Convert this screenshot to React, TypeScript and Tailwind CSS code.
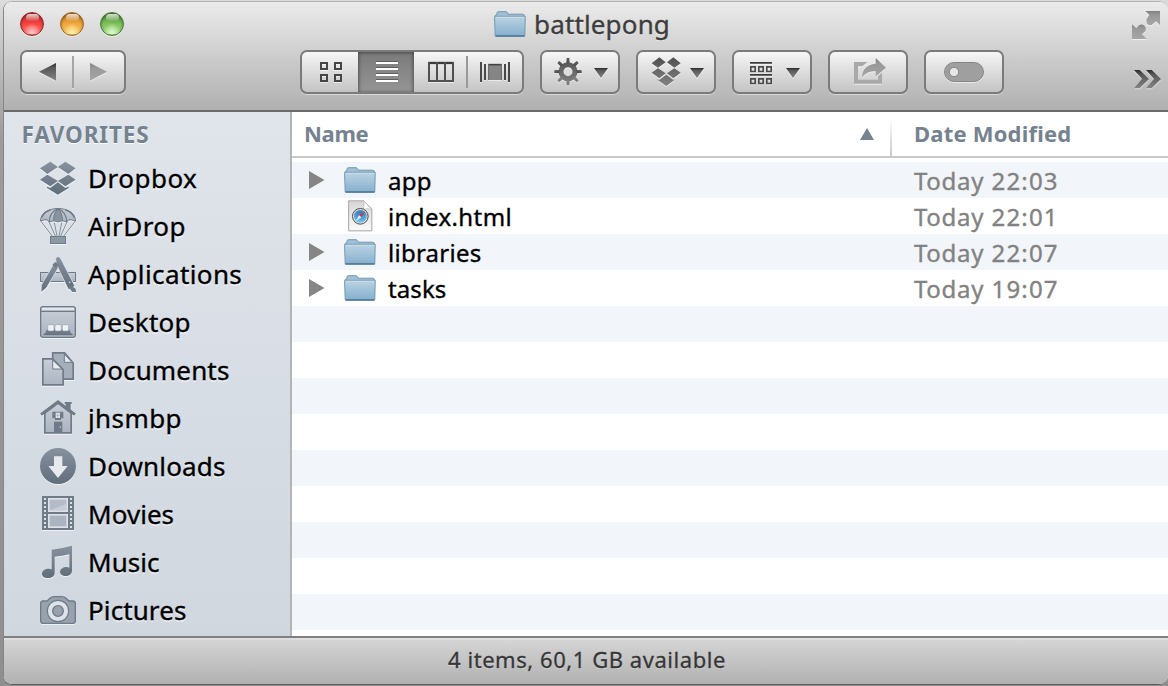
import React from "react";

type Row = { name: string; date: string; kind: "folder" | "html"; cls: string };

const rows: Row[] = [
  { name: "app", date: "Today 22:03", kind: "folder", cls: "tracking-[0.3px]" },
  { name: "index.html", date: "Today 22:01", kind: "html", cls: "tracking-[0.4px]" },
  { name: "libraries", date: "Today 22:07", kind: "folder", cls: "tracking-[0.25px]" },
  { name: "tasks", date: "Today 19:07", kind: "folder", cls: "tracking-[0.1px]" },
];

const emptyRows = 9;

function Folder() {
  return (
    <svg width="32" height="26" viewBox="0 0 32 26" className="shrink-0">
      <defs>
        <linearGradient id="folderBody" x1="0" y1="0" x2="0" y2="1">
          <stop offset="0" stopColor="#bcd3e2" />
          <stop offset="1" stopColor="#84afcd" />
        </linearGradient>
      </defs>
      <path d="M1.2 8V4.5L3 3.6V1.8Q3.2.7 4.4.7H12Q13 .7 13.4 1.8L14 3.2H28.5Q30.4 3.2 30.6 5V8Z" fill="#9fc0d6" stroke="#7297ae" strokeWidth="1" />
      <path d="M.8 5.3H31.2V7L30.8 24.5Q30.8 25.4 30 25.4H2Q1.2 25.4 1.2 24.5L.6 7Z" fill="url(#folderBody)" stroke="#6f9ab5" strokeWidth="1" />
      <path d="M1.6 6.3H30.4" stroke="#cfdfea" strokeWidth="1" />
      <path d="M1.5 24.8H30.5" stroke="#49728f" strokeWidth="1.2" />
    </svg>
  );
}

function HtmlFile() {
  return (
    <svg width="32" height="32" viewBox="161 269 96 96" className="shrink-0">
      <defs>
        <linearGradient id="page" x1="0" y1="0" x2="0" y2="1">
          <stop offset="0" stopColor="#d6d6d6" />
          <stop offset="1" stopColor="#fafafa" />
        </linearGradient>
        <linearGradient id="compass" x1="0" y1="0" x2="0" y2="1">
          <stop offset="0" stopColor="#2e6fb4" />
          <stop offset="1" stopColor="#62c3f5" />
        </linearGradient>
      </defs>
      <path d="M175 271.500H220L244.500 296V361.500H175Z" fill="url(#page)" stroke="#a5a5a5" strokeWidth="3" />
      <path d="M220 272Q223 284 219 297Q233 293 244 297Z" fill="#fff" stroke="#b5b5b5" strokeWidth="2" />
      <circle cx="210" cy="318" r="23.500" fill="#e4e4e4" stroke="#4c4c4c" strokeWidth="3" />
      <circle cx="210" cy="318" r="19" fill="url(#compass)" />
      <circle cx="210" cy="318" r="15.500" fill="none" stroke="#a9d8f7" strokeWidth="2.500" strokeDasharray="2 4" />
      <path d="M223 304L206 315L213 321Z" fill="#d8362e" />
      <path d="M197 332L206 315L213 321Z" fill="#f4f4f4" />
    </svg>
  );
}

const S = "#6f7b88";

function SideIcon({ y, children }: { y: number; children: React.ReactNode }) {
  return (
    <svg width="40" height="40" viewBox={`114 ${y} 120 120`} className="shrink-0 drop-shadow-[0_1px_0_rgba(255,255,255,0.6)]">
      {children}
    </svg>
  );
}

const G = "url(#slate)";
const L = "url(#slateLight)";

const sidebar: { label: string; cls: string; y: number; icon: React.ReactNode }[] = [
  {
    label: "Dropbox", cls: "tracking-[0.5px]", y: 144,
    icon: (
      <path fill={G} d="M120 175L151 155L173.500 171L142 192ZM227 175L196 155L173.500 171L205 192ZM120 209L142 194L173.500 213L151 229ZM227 209L205 194L173.500 213L196 229ZM141 230L151 234L173.500 217L196 234L206 230V234L173.500 254L141 234Z" />
    ),
  },
  {
    label: "AirDrop", cls: "tracking-[0.4px]", y: 288,
    icon: (
      <g stroke={S} strokeWidth="3" fill="none">
        <path d="M122 333L158 380M226 333L190 380M147 336L166 378M201 336L182 378M163 338L171 378M185 338L177 378" strokeWidth="2.500" />
        <path d="M121.500 333C121.500 308 148 295.500 174 295.500S226.500 308 226.500 333L213 329Q206 328 200 336Q187 328 174 336Q161 328 148 336Q142 328 135 329Z" fill={L} strokeLinejoin="round" />
        <path d="M148 336C148 318 156 303 174 296M200 336C200 318 192 303 174 296" strokeWidth="3.500" />
        <path d="M161 334C160 318 165 304 174 297C183 304 188 318 187 334" strokeWidth="3" fill="#8994a2" />
        <path d="M125 322Q132 305 152 300M223 322Q216 305 196 300" strokeWidth="5" />
        <rect x="151.500" y="379.500" width="45" height="21" fill="#8d98a5" />
      </g>
    ),
  },
  {
    label: "Applications", cls: "tracking-[0.4px]", y: 432,
    icon: (
      <g>
        <rect x="121.500" y="487.500" width="105" height="27" fill={L} stroke={S} strokeWidth="3" />
        <path d="M163 459L178 468L139 534L123 547L124 525Z" fill={G} stroke="#d9dee5" strokeWidth="2.500" />
        <path d="M167 444Q178 434 184 449L224 527L215 536L205 538L168 461Z" fill={G} stroke="#d9dee5" strokeWidth="2.500" />
        <path d="M215 527L227 537L228 546L217 546L205 531Z" fill={S} />
        <path d="M157 465L165 456L176 464L170 474Z" fill={S} />
        <circle cx="209" cy="517" r="2.500" fill="#d9dee5" />
      </g>
    ),
  },
  {
    label: "Desktop", cls: "tracking-[0.25px]", y: 21,
    icon: (
      <g>
        <rect x="122" y="35" width="104" height="92" rx="7" fill={L} stroke={S} strokeWidth="4" />
        <path d="M126 39H222V45H126Z" fill="#e3e7ed" />
        <path d="M122 49H226" stroke={S} strokeWidth="4" />
        <path d="M141 103H207L216 120H132Z" fill={S} />
        <path d="M130 118.500H218" stroke="#66727f" strokeWidth="4" />
        <g fill="#edf0f4" stroke="#8d98a5" strokeWidth="1.500">
          <rect x="143" y="89" width="19" height="19" rx="4" />
          <rect x="165" y="89" width="19" height="19" rx="4" />
          <rect x="187" y="89" width="19" height="19" rx="4" />
        </g>
      </g>
    ),
  },
  {
    label: "Documents", cls: "tracking-[0.15px]", y: 165,
    icon: (
      <g stroke={S} strokeWidth="5" strokeLinejoin="miter">
        <path d="M158 173.500H194L219.500 204V252.500H158Z" fill="#a5afbb" />
        <path d="M193 177V202H216Z" fill="#e6e9ee" strokeWidth="3" />
        <path d="M128.500 191.500H158L189.500 224V269.500H128.500Z" fill={L} />
        <path d="M158 195V222H186Z" fill="#e9ecf0" strokeWidth="3" />
      </g>
    ),
  },
  {
    label: "jhsmbp", cls: "tracking-[0.4px]", y: 309,
    icon: (
      <g>
        <path d="M194 321H215V327H212V347L197 335V327H194Z" fill={S} />
        <path d="M134.500 354L174 324L213.500 354V413.500H134.500Z" fill={L} stroke={S} strokeWidth="5" />
        <path d="M123 359L174 320.500L225 359" fill="none" stroke={S} strokeWidth="9" />
        <path d="M162 380H187V414H162Z" fill={S} />
        <circle cx="181" cy="396" r="2" fill="#d3d9e1" />
        <path d="M157 350H190V370H183V375H165V370H157Z" fill={S} />
        <rect x="167" y="353" width="13" height="16" fill="#e3e7ed" />
        <path d="M167 361H180M173.500 353V369" stroke="#a3acb8" strokeWidth="2" />
      </g>
    ),
  },
  {
    label: "Downloads", cls: "tracking-[0.15px]", y: 453,
    icon: (
      <g>
        <circle cx="174" cy="513" r="54" fill={G} />
        <path d="M162 484H187V513H203L174 549L145 513H162Z" fill="#e6e9ed" />
      </g>
    ),
  },
  {
    label: "Movies", cls: "tracking-[0.05px]", y: 27,
    icon: (
      <g>
        <rect x="126" y="33" width="96" height="102" fill={S} />
        <path d="M135 39V132M213 39V132" stroke="#dce1e7" strokeWidth="6" strokeDasharray="6 6" />
        <rect x="144" y="39" width="60" height="42" fill="#dde2e8" />
        <rect x="144" y="87" width="60" height="42" fill="#dde2e8" />
        <rect x="149" y="44" width="50" height="32" fill="#b2bbc7" />
        <rect x="149" y="92" width="50" height="32" fill="#aab3bf" />
        <path d="M149 76L199 56V76Z" fill="#c7ced7" />
      </g>
    ),
  },
  {
    label: "Music", cls: "tracking-[0.05px]", y: 171,
    icon: (
      <path fill={G} d="M155 194Q187 190 216 182V258C216 267 207 273 197 273C187 273 180 268 180 261C180 252 190 246 199 246Q204 246 208 248V208Q188 213 164 215V263C164 273 155 279 144 279C133 279 126 274 126 266C126 257 135 251 146 251Q151 251 155 253Z" />
    ),
  },
  {
    label: "Pictures", cls: "tracking-[0.1px]", y: 315,
    icon: (
      <g stroke={S} strokeWidth="4">
        <path d="M129 348H141L150 340Q155 335 162 335H186Q193 335 198 340L207 348H219Q226 349 226 356V407Q226 415 218 415H130Q122 415 122 407V356Q122 349 129 348Z" fill="#98a2af" />
        <circle cx="174" cy="378" r="32" fill="#dfe3e9" strokeWidth="3.500" />
        <circle cx="174" cy="378" r="16" fill="#98a2af" strokeWidth="4" />
      </g>
    ),
  },
];

const button =
  "flex h-[44px] shrink-0 overflow-hidden rounded-[7px] border-2 border-[#7b7b7b] bg-linear-to-b from-[#f6f6f6] to-[#c4c4c4] shadow-[0_1px_0_rgba(255,255,255,0.45)]";

const D = "url(#ink)";
const caret = "url(#caret)";
const M = "url(#muted)";

function Pad({ box, w, children }: { box: string; w: number; children: React.ReactNode }) {
  return (
    <svg width={w} height="40" viewBox={box} className="shrink-0 drop-shadow-[0_1px_0_rgba(255,255,255,0.55)]">
      {children}
    </svg>
  );
}

const teeth = [0, 45, 90, 135, 180, 225, 270, 315];

function Light({ cls, glow }: { cls: string; glow: string }) {
  return (
    <div className={`flex size-[24px] flex-col items-center rounded-full border ${cls} shadow-[inset_0_1px_3px_rgba(0,0,0,0.4),0_1px_0_rgba(255,255,255,0.5)]`}>
      <div className="mt-px h-[7px] w-[13px] rounded-full bg-linear-to-b from-white/80 to-white/5" />
      <div className={`mt-[2px] h-[11px] w-[18px] rounded-full ${glow}`} />
    </div>
  );
}

export default function App() {
  return (
    <div className="flex h-[686px] w-[1168px] overflow-hidden bg-linear-to-b from-[#dcdcdc] via-[#9d9b9b] via-20% to-[#8f8f8f] pt-px pl-[3px] font-['Noto_Sans','Open_Sans',sans-serif]">
      <svg width="0" height="0" className="absolute">
        <defs>
          <linearGradient id="slate" x1="0" y1="0" x2="0" y2="1">
            <stop offset="0" stopColor="#87929f" />
            <stop offset="1" stopColor="#606d7a" />
          </linearGradient>
          <linearGradient id="slateLight" x1="0" y1="0" x2="0" y2="1">
            <stop offset="0" stopColor="#c9cfd8" />
            <stop offset="1" stopColor="#abb4c0" />
          </linearGradient>
          <linearGradient id="ink" gradientUnits="userSpaceOnUse" x1="0" y1="172" x2="0" y2="262">
            <stop offset="0" stopColor="#505050" />
            <stop offset="1" stopColor="#858585" />
          </linearGradient>
          <linearGradient id="caret" x1="0" y1="0" x2="0" y2="1">
            <stop offset="0" stopColor="#2c2c2c" />
            <stop offset=".25" stopColor="#575757" />
            <stop offset="1" stopColor="#858585" />
          </linearGradient>
          <linearGradient id="muted" x1="0" y1="0" x2="0" y2="1">
            <stop offset="0" stopColor="#828282" />
            <stop offset=".3" stopColor="#999" />
            <stop offset="1" stopColor="#a6a6a6" />
          </linearGradient>
        </defs>
      </svg>

      <div className="flex h-[684px] w-[1165px] flex-col overflow-hidden rounded-[9px] border-t border-b border-l border-t-[#b2b2b2] border-b-[#5c5c5c] border-l-[#868686] bg-white">
        <header className="h-[110px] shrink-0 border-b-2 border-[#6b6a6b] bg-linear-to-b from-[#ebebeb] to-[#b0b0b0]">
          <div className="flex h-[44px] items-center">
            <div className="flex w-[490px] shrink-0 gap-[16px] pl-[16px]">
              <Light cls="border-[#9a2a2d] bg-linear-to-b from-[#b52c30] via-[#f8433f] via-50% to-[#f57672]" glow="bg-radial-[at_50%_90%] from-[#ffc9cb] to-transparent to-70%" />
              <Light cls="border-[#9d6528] bg-linear-to-b from-[#bd7526] via-[#f2a83c] via-50% to-[#f3c867]" glow="bg-radial-[at_50%_90%] from-[#fff3ae] to-transparent to-70%" />
              <Light cls="border-[#447a35] bg-linear-to-b from-[#4a8737] via-[#7fc25b] via-50% to-[#a1da84]" glow="bg-radial-[at_50%_90%] from-[#e4fbd2] to-transparent to-70%" />
            </div>
            <Folder />
            <h1 className="pl-[8px] text-[26px] leading-[44px] tracking-[0.15px] text-[#3d3d3d] [-webkit-text-stroke:0.35px] [text-shadow:0_1px_0_rgba(255,255,255,0.6)]">battlepong</h1>
            <svg width="32" height="32" viewBox="945 27 96 96" className="mt-[2px] mr-[6px] ml-auto drop-shadow-[0_1px_0_rgba(255,255,255,0.6)]">
              <path d="M991 33H1035V76L1023 64L1010 75Q1003 78 996 71Q992 65 995 58L1003 45Z" fill={M} />
              <path d="M951 73L964 85L973 75Q981 71 989 78Q995 84 992 92L981 103L995 117H951Z" fill={M} />
            </svg>
          </div>

          <div className="mt-[4px] flex items-start pl-[16px]">
            <div className={`${button} w-[106px]`}>
              <Pad box="66 156 306 120" w={102}>
                <path d="M117 215L168 189V242Z" fill={caret} />
                <path d="M219 168V264" stroke="#979797" strokeWidth="5" />
                <path d="M270 189L321 215L270 242Z" fill={M} />
              </Pad>
            </div>

            <div className={`${button} ml-[174px] w-[224px]`}>
              <Pad box="36 156 168 120" w={56}>
                <g fill="none" stroke="#454545" strokeWidth="6">
                  <path d="M93 189H111V207H93ZM135 189H153V207H135ZM93 225H111V243H93ZM135 225H153V243H135Z" />
                </g>
              </Pad>
              <div className="h-[40px] w-[56px] shrink-0 bg-linear-to-b from-[#7a7a7a] to-[#959595] shadow-[inset_2px_0_3px_rgba(0,0,0,0.22),inset_-2px_0_3px_rgba(0,0,0,0.22),inset_0_2px_3px_rgba(0,0,0,0.15)]">
                <svg width="56" height="40" viewBox="204 156 168 120">
                  <path d="M258 184.500H324M258 202.500H324M258 220.500H324M258 238.500H324" stroke="#5e5e5e" strokeWidth="3" />
                  <path d="M258 189H324M258 207H324M258 225H324M258 243H324" stroke="#fff" strokeWidth="6" />
                </svg>
              </div>
              <Pad box="372 156 156 120" w={52}>
                <path d="M414 189H492" stroke="#3b3b3b" strokeWidth="7" />
                <path d="M417 186V246M441 186V246M465 186V246M489 186V246M414 243H492" stroke="#505050" strokeWidth="6" fill="none" />
              </Pad>
              <div className="my-[4px] w-[2px] shrink-0 bg-[#999]" />
              <Pad box="534 156 162 120" w={54}>
                <path d="M573 186V246M657 186V246M585 192V240M645 192V240" stroke="#484848" strokeWidth="6" />
                <rect x="594" y="192" width="42" height="48" fill="#858585" />
                <path d="M594 194H636" stroke="#444" strokeWidth="5" />
                <path d="M596 192V240M634 192V240" stroke="#6a6a6a" strokeWidth="3" />
              </Pad>
            </div>

            <div className={`${button} ml-[16px] w-[80px]`}>
              <Pad box="36 156 228 120" w={76}>
                <circle cx="114" cy="215" r="21" fill="none" stroke={D} strokeWidth="15" />
                {teeth.map((a) => (
                  <path key={a} d="M109 190L110 174H118L119 190Z" fill={a > 90 && a < 270 ? "#7d7d7d" : "#555"} transform={`rotate(${a} 114 215)`} />
                ))}
                <path d="M192 204H234L213 234Z" fill={caret} />
              </Pad>
            </div>

            <div className={`${button} ml-[16px] w-[80px]`}>
              <Pad box="324 156 228 120" w={76}>
                <path fill={D} d="M365 190L388 172L407 187L384 203ZM452 190L430 172L411 187L433 203ZM365 218L384 205L407 220L388 235ZM452 218L433 205L411 220L430 235ZM380 238L388 240L409 224L430 240L436 238L409 258Z" />
                <path d="M480 204H522L501 234Z" fill={caret} />
              </Pad>
            </div>

            <div className={`${button} ml-[16px] w-[80px]`}>
              <Pad box="612 156 228 120" w={76}>
                <path d="M660 188.500H726M660 224.500H726" stroke="#3c3c3c" strokeWidth="5" />
                <path fill="none" stroke="#4b4b4b" strokeWidth="5" d="M662.500 200.500H675.500V214.500H662.500ZM686.500 200.500H699.500V214.500H686.500ZM710.500 200.500H723.500V214.500H710.500ZM662.500 236.500H675.500V250.500H662.500ZM686.500 236.500H699.500V250.500H686.500ZM710.500 236.500H723.500V250.500H710.500Z" />
                <path d="M768 204H810L789 234Z" fill={caret} />
              </Pad>
            </div>

            <div className={`${button} ml-[16px] w-[80px]`}>
              <Pad box="45 156 228 120" w={76}>
                <path d="M117 186H158L142 199H129V239H189V229L201 218V251H117Z" fill="#a9a9a9" />
                <path d="M182 174L213 203L182 230V214Q159 210 141 232Q142 196 182 191Z" fill={M} />
              </Pad>
            </div>

            <div className={`${button} ml-[16px] w-[80px]`}>
              <Pad box="333 156 228 120" w={76}>
                <rect x="388.500" y="187.500" width="117" height="57" rx="28.500" fill="#9f9f9f" stroke="#858585" strokeWidth="3" />
                <circle cx="417" cy="216" r="14" fill="#e6e6e6" stroke="#848484" strokeWidth="3" />
              </Pad>
            </div>

            <svg width="32" height="22" viewBox="951 207 96 66" className="mt-[19px] ml-[128px] shrink-0 drop-shadow-[0_1px_0_rgba(255,255,255,0.6)]">
              <path d="M957 210H974L1002 237L974 265H957L981 237ZM993 210H1010L1038 237L1010 265H993L1017 237Z" fill={caret} />
            </svg>
          </div>
        </header>

        <div className="flex h-[524px] shrink-0">
          <aside className="w-[288px] shrink-0 border-r-2 border-[#b4b4b4] bg-linear-to-b from-[#e0e4eb] to-[#d0d7df]">
            <h2 className="h-[42px] pt-[4px] pl-[17.500px] text-[22.500px] leading-[38px] font-bold tracking-[0.85px] text-[#75828f] [text-shadow:0_1px_0_#fff]">FAVORITES</h2>
            <ul>
              {sidebar.map((item) => (
                <li key={item.label} className="flex h-[48px] items-center pl-[34px]">
                  <SideIcon y={item.y}>{item.icon}</SideIcon>
                  <span className={`pl-[10px] text-[26px] leading-[48px] text-black [-webkit-text-stroke:0.35px] [text-shadow:0_2px_0_rgba(255,255,255,0.5)] ${item.cls}`}>{item.label}</span>
                </li>
              ))}
            </ul>
          </aside>

          <main className="flex flex-1 flex-col overflow-hidden bg-white">
            <div className="flex h-[46px] shrink-0 border-b-2 border-[#c9c9c9] text-[22px] leading-[42px] font-bold text-[#75828f]">
              <div className="flex w-[598px] items-start justify-between pl-[12px]">
                <span className="tracking-[-0.3px]">Name</span>
                <svg width="14" height="12" viewBox="0 0 14 12" className="mt-[16px] mr-[16px]">
                  <path d="M7 0L14 12H0Z" fill="#75828f" />
                </svg>
              </div>
              <div className="mt-[6px] w-[2px] bg-linear-to-b from-white to-[#c9c9c9]" />
              <span className="pl-[22px] tracking-[0.2px]">Date Modified</span>
            </div>
            <div className="mt-[4px]">
              {rows.map((row) => (
                <div key={row.name} className="flex h-[36px] items-center odd:bg-[#f2f5fa]">
                  <div className="flex w-[52px] shrink-0 pl-[17px]">
                    {row.kind === "folder" && (
                      <svg width="16" height="18" viewBox="0 0 16 18">
                        <path d="M0 0L15.500 9L0 18Z" fill="#868686" />
                      </svg>
                    )}
                  </div>
                  {row.kind === "folder" ? <Folder /> : <HtmlFile />}
                  <span className={`w-[538px] pt-px pl-[12px] text-[24px] leading-[35px] text-black [-webkit-text-stroke:0.35px] ${row.cls}`}>{row.name}</span>
                  <span className="pt-px text-[24px] leading-[35px] tracking-[0.7px] [word-spacing:0.500px] text-[#828282] [-webkit-text-stroke:0.35px]">
                    {row.date.slice(0, 6)}
                    <span className="tracking-[1.150px]">{row.date.slice(6)}</span>
                  </span>
                </div>
              ))}
              {Array.from({ length: emptyRows }, (_, i) => (
                <div key={i} className="h-[36px] odd:bg-[#f2f5fa]" />
              ))}
            </div>
          </main>
        </div>

        <footer className="flex flex-1 justify-center border-t-2 border-[#808080] bg-linear-to-b from-[#d6d6d6] to-[#b1b1b1] shadow-[inset_0_2px_0_#dfdfdf]">
          <span className="pl-[2px] text-[22px] leading-[42px] tracking-[0.55px] text-[#363636] [-webkit-text-stroke:0.3px] [text-shadow:0_1px_0_rgba(255,255,255,0.45)]">4 items, 60,1 GB available</span>
        </footer>
      </div>
    </div>
  );
}
